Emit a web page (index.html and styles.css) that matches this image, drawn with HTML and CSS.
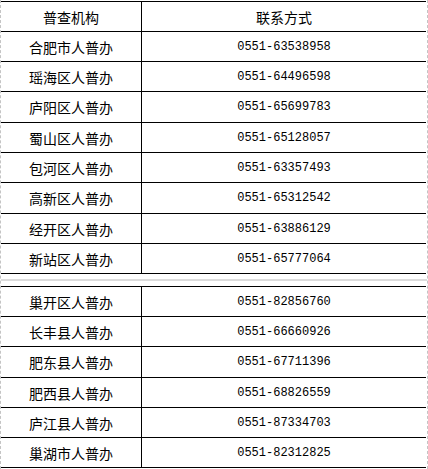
FILE: index.html
```html
<!DOCTYPE html>
<html lang="zh-CN">
<head>
<meta charset="utf-8">
<title>人普办联系方式</title>
<link rel="stylesheet" href="styles.css">
</head>
<body>
<div class="sheet">
  <div class="block first">
    <div class="row head"><div class="c org">普查机构</div><div class="c tel cjk">联系方式</div></div>
    <div class="row"><div class="c org">合肥市人普办</div><div class="c tel">0551-63538958</div></div>
    <div class="row"><div class="c org">瑶海区人普办</div><div class="c tel">0551-64496598</div></div>
    <div class="row tall"><div class="c org">庐阳区人普办</div><div class="c tel">0551-65699783</div></div>
    <div class="row"><div class="c org">蜀山区人普办</div><div class="c tel">0551-65128057</div></div>
    <div class="row"><div class="c org">包河区人普办</div><div class="c tel">0551-63357493</div></div>
    <div class="row tall"><div class="c org">高新区人普办</div><div class="c tel">0551-65312542</div></div>
    <div class="row"><div class="c org">经开区人普办</div><div class="c tel">0551-63886129</div></div>
    <div class="row"><div class="c org">新站区人普办</div><div class="c tel">0551-65777064</div></div>
  </div>
  <div class="gap"></div>
  <div class="block second">
    <div class="row"><div class="c org">巢开区人普办</div><div class="c tel">0551-82856760</div></div>
    <div class="row"><div class="c org">长丰县人普办</div><div class="c tel">0551-66660926</div></div>
    <div class="row tall"><div class="c org">肥东县人普办</div><div class="c tel">0551-67711396</div></div>
    <div class="row"><div class="c org">肥西县人普办</div><div class="c tel">0551-68826559</div></div>
    <div class="row"><div class="c org">庐江县人普办</div><div class="c tel">0551-87334703</div></div>
    <div class="row"><div class="c org">巢湖市人普办</div><div class="c tel">0551-82312825</div></div>
  </div>
</div>
</body>
</html>
```
FILE: styles.css
```css
html, body {
  margin: 0;
  padding: 0;
  background: #fff;
}
.sheet {
  width: 426px;
  height: 468px;
  border-left: 1px dashed #c4c4c4;
  border-right: 1px dashed #c4c4c4;
  padding-top: 1px;
  box-sizing: content-box;
  color: #000;
  font-family: "Noto Sans CJK SC", sans-serif;
  font-size: 14px;
  overflow: hidden;
}
.block {
  width: 425px;
  border-top: 1px solid #000;
}
.row {
  display: grid;
  grid-template-columns: 140px 1px 284px;
  height: 30px;
  border-bottom: 1px solid #000;
  box-sizing: border-box;
}
.row.tall {
  height: 31px;
}
.row .c {
  display: flex;
  align-items: center;
  justify-content: center;
}
.row .org {
  grid-column: 1;
}
.row .tel {
  grid-column: 3;
  font-family: "Liberation Mono", monospace;
  font-size: 12px;
}
.row .tel.cjk {
  font-family: "Noto Sans CJK SC", sans-serif;
  font-size: 14px;
}
.row::after {
  content: "";
  grid-column: 2;
  grid-row: 1;
  background: #000;
}
.gap {
  height: 12px;
  box-sizing: border-box;
  padding-top: 5px;
}
.gap::before {
  content: "";
  display: block;
  height: 2px;
  width: 426px;
  background: #dcdcdc;
}
```
